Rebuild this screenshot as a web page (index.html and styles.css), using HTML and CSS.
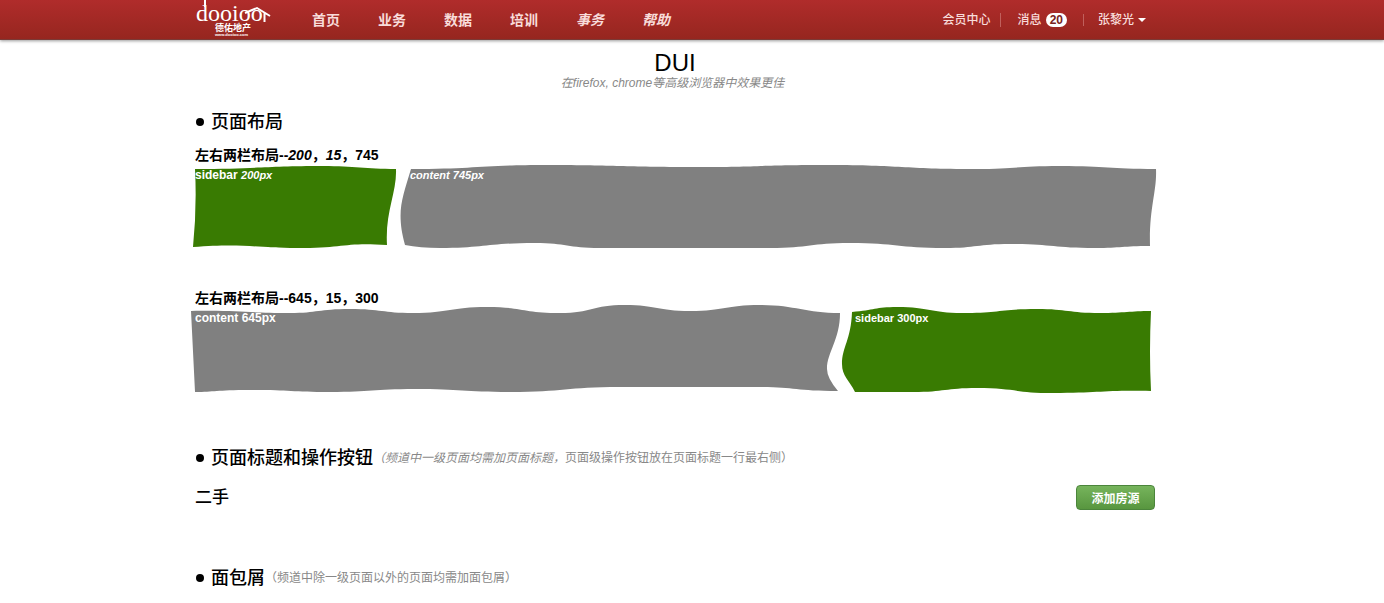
FILE: index.html
```html
<!DOCTYPE html>
<html lang="zh-CN">
<head>
<meta charset="utf-8">
<title>DUI</title>
<link rel="stylesheet" href="styles.css">
</head>
<body>
<header class="topbar">
  <div class="wrap topbar-inner">
    <a class="logo" href="#" aria-label="德佑地产">
      <svg width="78" height="39" viewBox="0 0 78 39">
        <text class="logo-word" x="1" y="21">dooioo</text>
        <path d="M10 0v7" stroke="#fff" stroke-width="2" fill="none"/>
        <path d="M50 13l12-5 13 8M69.500 12v10" stroke="#fff" stroke-width="2" fill="none"/>
        <text class="logo-name" x="20" y="31">德佑地产</text>
        <text class="logo-url" x="20" y="36">www.dooioo.com</text>
      </svg>
    </a>
    <nav class="nav">
      <a href="#">首页</a>
      <a href="#">业务</a>
      <a href="#">数据</a>
      <a href="#">培训</a>
      <a class="slant" href="#">事务</a>
      <a class="slant" href="#">帮助</a>
    </nav>
    <div class="user">
      <a class="user-item" href="#">会员中心</a>
      <a class="user-item" href="#">消息<span class="badge">20</span></a>
      <button class="user-item" type="button">张黎光
        <svg width="8" height="4" viewBox="0 0 8 4"><path d="M0 0h8L4 4z" fill="#fff"/></svg>
      </button>
    </div>
  </div>
</header>

<main class="wrap">
  <div class="intro">
    <h1>DUI</h1>
    <p>在firefox, chrome等高级浏览器中效果更佳</p>
  </div>

  <section class="layouts">
    <h2>页面布局</h2>

    <h3>左右两栏布局--<em>200</em>，<em>15</em>，745</h3>
    <div class="row row-left">
      <div class="panel green">
        <svg class="shape" viewBox="0 0 200 80" preserveAspectRatio="none"><path d="M0 2C60 2 70 -1 128 -1C160 -1 170 2 201 2C202 25 190 45 192 78C150 75 150 81 102 81C60 81 50 76 -2 80Q2 40 0 2z"/></svg>
        <span>sidebar <em>200px</em></span>
      </div>
      <div class="panel grey">
        <svg class="shape" viewBox="0 0 745 80" preserveAspectRatio="none"><path d="M1 2C69 2 69 -2 137 -2C210 -2 210 0 284 0C350 0 350 -2 418 -2C492 -2 492 2 565 2C607 2 607 -1 650 -1C698 -1 698 2 746 2C747 25 739 40 740 79C712 79 712 81 685 81C642 81 642 77 600 77C567 77 567 81 535 81C487 81 487 76 440 76C400 76 400 81 360 81H190C157 81 157 76 125 76C77 76 77 81 30 81Q10 81 -5 78C-14 45 -8 32 1 2z"/></svg>
        <em>content 745px</em>
      </div>
    </div>

    <h3>左右两栏布局--645，15，300</h3>
    <div class="row row-right">
      <div class="panel grey">
        <svg class="shape" viewBox="0 -2 645 80" preserveAspectRatio="none"><path d="M-4 -1C45 -2 50 1 95 1C123 1 123 -3 155 -3C187 -3 187 1 218 1C255 1 255 -5 292 -5C328 -5 328 1 365 1C397 1 397 -7 430 -7C462 -7 462 -1 495 -1C530 -1 530 -7 565 -7C600 -7 610 1 645 1C645 28 632 40 632 57Q632 66 643 79C600 79 600 75 565 75H425C370 75 370 80 315 80C267 80 267 77 220 77C177 77 177 80 135 80C95 80 95 78 55 78C20 78 20 80 0 80z"/></svg>
        <span>content 645px</span>
      </div>
      <div class="panel green">
        <svg class="shape" viewBox="0 -2 300 80" preserveAspectRatio="none"><path d="M-3 0C20 -2 20 -5 42 -5C75 -5 75 1 107 1C145 1 145 -3 182 -3C213 -3 213 1 245 1C270 1 275 -1 296 -1Q294 40 296 79C247 78 247 81 198 81C160 81 160 76 122 76C90 76 90 80 58 80H0C-6 68 -13 64 -13 52C-13 35 -4 28 -3 0z"/></svg>
        <span>sidebar 300px</span>
      </div>
    </div>
  </section>

  <section class="titles">
    <h2>页面标题和操作按钮<small><em>（频道中一级页面均需加页面标题，</em>页面级操作按钮放在页面标题一行最右侧）</small></h2>
    <div class="page-title">
      <h4>二手</h4>
      <button class="btn" type="button">添加房源</button>
    </div>
  </section>

  <section>
    <h2>面包屑<small>（频道中除一级页面以外的页面均需加面包屑）</small></h2>
  </section>
</main>
</body>
</html>
```
FILE: styles.css
```css
* {
  box-sizing: border-box;
}

body {
  margin: 0;
  background: #fff;
  color: #000;
  font: 12px/16px "Liberation Sans", "Noto Sans CJK SC", sans-serif;
}

h1, h2, h3, h4, p {
  margin: 0;
}

a {
  color: inherit;
  text-decoration: none;
}

.topbar,
main {
  padding-right: 34px;
}

.wrap {
  box-sizing: content-box;
  max-width: 960px;
  margin: 0 auto;
}

.topbar {
  background: linear-gradient(#b02c2b, #96261f);
  border-bottom: 1px solid #7c3a36;
  box-shadow: 0 1px 3px rgba(0, 0, 0, 0.4);
}

.topbar-inner {
  display: flex;
  height: 39px;
  color: #f8dcda;
}

.logo {
  width: 117px;
}

.logo svg {
  display: block;
  fill: #fff;
}

.logo-word {
  font: 24px "Liberation Serif", serif;
}

.logo-name {
  font: bold 9px "Noto Sans CJK SC", sans-serif;
}

.logo-url {
  font: bold 4px "Liberation Sans", sans-serif;
}

.nav {
  display: flex;
  gap: 38px;
  font-size: 14px;
  font-weight: bold;
  line-height: 40px;
}

.slant {
  font-style: italic;
}

.user {
  display: flex;
  align-items: center;
  margin-left: auto;
  padding-right: 9px;
}

.user-item {
  display: flex;
  align-items: center;
  gap: 4px;
  padding: 0;
  border: 0;
  background: none;
  color: inherit;
  font: inherit;
  font-weight: 500;
  line-height: 12px;
}

.user-item + .user-item {
  margin-left: 9px;
  padding-left: 17px;
  border-left: 1px solid #c0605c;
}

.user-item:last-child {
  margin-left: 16px;
  padding-left: 14px;
}

.badge {
  padding: 0 4px;
  border-radius: 7px;
  background: #fff;
  color: #7a2320;
  font-weight: bold;
  line-height: 14px;
}

.intro {
  padding-top: 9px;
  text-align: center;
}

h1 {
  font-size: 24px;
  font-weight: normal;
  line-height: 27px;
}

.intro p {
  margin-right: 5px;
  color: #888;
  font-style: italic;
  line-height: 14px;
}

h2 {
  display: flex;
  align-items: center;
  font-size: 18px;
  font-weight: 500;
  line-height: 24px;
}

h2::before {
  content: "";
  width: 8px;
  height: 8px;
  margin: 0 7px 0 1px;
  border-radius: 50%;
  background: #000;
}

h2 small {
  color: #888;
  font-size: 12px;
  font-weight: normal;
}

.layouts {
  padding-top: 20px;
}

h3 {
  margin-top: 11px;
  font-size: 14px;
  font-weight: bold;
  line-height: 20px;
}

.row {
  display: grid;
  gap: 15px;
  margin: 2px 0 41px;
}

.row-left {
  grid-template-columns: 200px 1fr;
}

.row-right {
  grid-template-columns: 1fr 300px;
}

.panel {
  position: relative;
  height: 80px;
  color: #fff;
  font-weight: bold;
}

.panel em,
.row-right .green {
  font-size: 11px;
}

.panel span,
.panel > em {
  position: relative;
}

.shape {
  position: absolute;
  inset: 0;
  width: 100%;
  height: 100%;
  overflow: visible;
}

.green .shape {
  fill: #397b02;
}

.grey .shape {
  fill: #808080;
}

.titles {
  padding: 15px 0 56px;
}

.page-title {
  display: flex;
  align-items: center;
  justify-content: space-between;
  margin-top: 15px;
}

h4 {
  font-size: 17px;
  font-weight: 500;
  line-height: 25px;
}

.btn {
  width: 79px;
  height: 25px;
  padding: 0;
  border: 1px solid #4b853b;
  border-radius: 4px;
  background: linear-gradient(#76b45c, #58963f);
  color: #fff;
  font: bold 12px "Liberation Sans", "Noto Sans CJK SC", sans-serif;
}
```
